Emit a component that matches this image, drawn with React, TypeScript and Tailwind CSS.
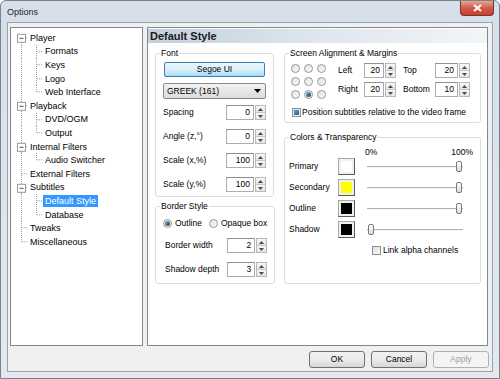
import React from "react";

type TreeNode = {
  label: string;
  level: 0 | 1;
  expander?: boolean;
  lastChild?: boolean;
  selected?: boolean;
};

const TREE: TreeNode[] = [
  { label: "Player", level: 0, expander: true },
  { label: "Formats", level: 1 },
  { label: "Keys", level: 1 },
  { label: "Logo", level: 1 },
  { label: "Web Interface", level: 1, lastChild: true },
  { label: "Playback", level: 0, expander: true },
  { label: "DVD/OGM", level: 1 },
  { label: "Output", level: 1, lastChild: true },
  { label: "Internal Filters", level: 0, expander: true },
  { label: "Audio Switcher", level: 1, lastChild: true },
  { label: "External Filters", level: 0 },
  { label: "Subtitles", level: 0, expander: true },
  { label: "Default Style", level: 1, selected: true },
  { label: "Database", level: 1, lastChild: true },
  { label: "Tweaks", level: 0 },
  { label: "Miscellaneous", level: 0 },
];

const ROW_H = 13.6;
const MID = 6.8;

function TreeRow({ node, first, last }: { node: TreeNode; first: boolean; last: boolean }) {
  const w = node.level === 0 ? 17 : 32;
  return (
    <div className="flex h-[13.6px] items-center">
      <svg width={w} height={ROW_H} className="shrink-0">
        <g stroke="#a0a0a0" strokeDasharray="1 1" strokeWidth="1">
          {node.level === 0 ? (
            <>
              <line x1="10.5" y1={first ? MID : 0} x2="10.5" y2={last ? MID : ROW_H} />
              <line x1="11" y1={MID} x2="17" y2={MID} />
            </>
          ) : (
            <>
              <line x1="10.5" y1="0" x2="10.5" y2={ROW_H} />
              <line x1="25.5" y1="0" x2="25.5" y2={node.lastChild ? MID : ROW_H} />
              <line x1="26" y1={MID} x2="32" y2={MID} />
            </>
          )}
        </g>
        {node.expander && (
          <g>
            <rect x="6.5" y={MID - 3.5} width="8" height="8" fill="#fff" stroke="#989898" />
            <line x1="8.5" y1={MID + 0.5} x2="12.5" y2={MID + 0.5} stroke="#4d4d4d" />
          </g>
        )}
      </svg>
      <span
        className={
          node.selected
            ? "px-[2px] leading-[12px] bg-[#3399ff] text-white"
            : "px-[2px] leading-[12px]"
        }
      >
        {node.label}
      </span>
    </div>
  );
}

function Arrow({ up }: { up?: boolean }) {
  return (
    <svg width="5" height="3" viewBox="0 0 5 3">
      <path d={up ? "M0 3 L2.5 0 L5 3 Z" : "M0 0 L2.5 3 L5 0 Z"} fill="#4a4a4a" />
    </svg>
  );
}

function Spin({ value, w }: { value: string; w: string }) {
  return (
    <div className={`flex h-[15px] ${w}`}>
      <div className="flex-1 border border-[#abadb3] border-t-[#8e8f8f] bg-white pr-[3px] text-right leading-[13px]">
        {value}
      </div>
      <div className="ml-[1px] flex w-[11px] flex-col border border-[#b9b9b9] bg-[#f2f2f2]">
        <div className="flex flex-1 items-center justify-center border-b border-[#c8c8c8] bg-gradient-to-b from-[#f8f8f8] to-[#e4e4e4]">
          <Arrow up />
        </div>
        <div className="flex flex-1 items-center justify-center bg-gradient-to-b from-[#f8f8f8] to-[#e4e4e4]">
          <Arrow />
        </div>
      </div>
    </div>
  );
}

function Radio({ checked }: { checked?: boolean }) {
  return (
    <div className="flex h-[9px] w-[9px] shrink-0 items-center justify-center rounded-full border border-[#979797] bg-gradient-to-br from-[#e2e2e2] to-[#fafafa]">
      {checked && (
        <div className="h-[5px] w-[5px] rounded-full bg-gradient-to-br from-[#7ab0d2] to-[#1a3c55]" />
      )}
    </div>
  );
}

function Check({ filled }: { filled?: boolean }) {
  return (
    <div className="flex h-[9px] w-[9px] shrink-0 items-center justify-center border border-[#8e8f8f] bg-gradient-to-br from-[#dcdcdc] to-[#fbfbfb]">
      {filled && <div className="h-[5px] w-[5px] bg-gradient-to-br from-[#5aa6dc] to-[#1a5c97]" />}
    </div>
  );
}

function Swatch({ color }: { color: string }) {
  return (
    <div className="h-[17px] w-[17px] shrink-0 border border-[#a8a8a8] border-r-[#5a5a5a] border-b-[#5a5a5a] bg-[#f0f0f0] p-[2px]">
      <div className={`h-full w-full ${color}`} />
    </div>
  );
}

function Slider({ atEnd }: { atEnd: boolean }) {
  return (
    <div
      className={`relative ml-[12px] flex h-[12px] w-[96px] items-center ${
        atEnd ? "justify-end pr-[1px]" : "justify-start pl-[1px]"
      }`}
    >
      <div className="absolute left-0 right-0 top-[5px] h-[2px] border-t border-[#b0b0b0] border-b border-b-[#f4f4f4]" />
      <div className="relative h-[11px] w-[6px] rounded-[2px] border border-[#7a7a7a] bg-gradient-to-b from-white to-[#dcdcdc]" />
    </div>
  );
}

function DlgButton({ label, disabled }: { label: string; disabled?: boolean }) {
  return (
    <div
      className={
        disabled
          ? "flex h-[17px] w-[56px] items-center justify-center rounded-[3px] border border-[#adb2b5] bg-[#f4f4f4] text-[#a0a0a0]"
          : "flex h-[17px] w-[56px] items-center justify-center rounded-[3px] border border-[#707070] bg-gradient-to-b from-[#f2f2f2] via-[#ebebeb] to-[#d6d6d6]"
      }
    >
      {label}
    </div>
  );
}

export default function App() {
  return (
    <div className="flex h-[379px] w-[500px] flex-col overflow-hidden whitespace-nowrap rounded-t-[6px] border border-[#7a838c] bg-gradient-to-b from-[#d6dfe9] to-[#e4e9ef] font-['Liberation_Sans',Arial,sans-serif] text-[9px] text-black">
      {/* title bar */}
      <div className="flex h-[21px] items-start justify-between">
        <div className="pl-[6px] pt-[6px] text-[9px] leading-[11px] text-[#1e1e1e]">Options</div>
        <div className="mr-[5px] flex h-[15px] w-[34px] items-center justify-center rounded-b-[4px] border border-t-0 border-[#7b3328] bg-gradient-to-b from-[#e8a493] via-[#d25a48] to-[#c4402f]">
          <svg width="9" height="8" viewBox="0 0 9 8">
            <path d="M1 1 L8 7 M8 1 L1 7" stroke="#fff" strokeWidth="2" />
          </svg>
        </div>
      </div>

      {/* client area */}
      <div className="mx-[6px] flex h-[350px] flex-col border border-[#97a3b0] bg-[#f0f0f0]">
        <div className="flex pl-[2px] pt-[4px]">
          {/* tree */}
          <div className="h-[319px] w-[133px] border border-[#828790] bg-white pt-[3px]">
            {TREE.map((n, i) => (
              <TreeRow key={n.label} node={n} first={i === 0} last={i === TREE.length - 1} />
            ))}
          </div>

          {/* page */}
          <div className="ml-[4px] h-[319px] w-[341px] border border-[#828790] bg-white pt-[1px] text-[8.5px]">
            <div className="h-[14px] bg-gradient-to-r from-[#c3cfdc] via-[#dfe6ee] to-[#f2f5f8] pl-[2px] text-[11px] font-bold leading-[14px] text-[#1a1a1a]">
              Default Style
            </div>

            <div className="mt-[4px] flex gap-[10px] pl-[7px]">
              {/* left column */}
              <div className="flex w-[119px] flex-col">
                <fieldset className="h-[150px] rounded-[3px] border border-[#d5dfe5]">
                  <legend className="ml-[4px] px-[1px] leading-[12px]">Font</legend>
                  <div className="flex flex-col px-[7px]">
                    <div className="mx-[1px] mt-[3px] flex h-[15px] items-center justify-center rounded-[2px] border border-[#3c7fb1] bg-gradient-to-b from-[#eaf6fd] via-[#d9f0fc] to-[#a7d9f5]">
                      Segoe UI
                    </div>
                    <div className="mt-[6px] flex h-[16px] items-center justify-between rounded-[2px] border border-[#8a8a8a] bg-gradient-to-b from-[#f2f2f2] to-[#dcdcdc] pl-[3px] pr-[4px]">
                      <span>GREEK (161)</span>
                      <svg width="7" height="4" viewBox="0 0 7 4">
                        <path d="M0 0 L3.5 4 L7 0 Z" fill="#000" />
                      </svg>
                    </div>
                    <div className="mt-[6px] flex flex-col gap-[9px]">
                      {[
                        ["Spacing", "0"],
                        ["Angle (z,°)", "0"],
                        ["Scale (x,%)", "100"],
                        ["Scale (y,%)", "100"],
                      ].map(([l, v]) => (
                        <div key={l} className="flex items-center justify-between">
                          <span>{l}</span>
                          <Spin value={v} w="w-[40px]" />
                        </div>
                      ))}
                    </div>
                  </div>
                </fieldset>

                <fieldset className="mt-[3px] h-[84px] rounded-[3px] border border-[#d5dfe5]">
                  <legend className="ml-[4px] px-[1px] leading-[12px]">Border Style</legend>
                  <div className="flex flex-col px-[7px]">
                    <div className="mt-[6px] flex h-[11px] items-center">
                      <Radio checked />
                      <span className="ml-[3px]">Outline</span>
                      <div className="ml-[7px]">
                        <Radio />
                      </div>
                      <span className="ml-[3px]">Opaque box</span>
                    </div>
                    <div className="mt-[9px] flex items-center justify-between pl-[2px]">
                      <span>Border width</span>
                      <Spin value="2" w="w-[40px]" />
                    </div>
                    <div className="mt-[9px] flex items-center justify-between pl-[2px]">
                      <span>Shadow depth</span>
                      <Spin value="3" w="w-[40px]" />
                    </div>
                  </div>
                </fieldset>
              </div>

              {/* right column */}
              <div className="flex w-[197px] flex-col">
                <fieldset className="h-[76px] rounded-[3px] border border-[#d5dfe5]">
                  <legend className="ml-[4px] px-[1px] leading-[12px]">Screen Alignment &amp; Margins</legend>
                  <div className="mt-[4px] flex items-start pl-[6px]">
                    <div className="mt-[1px] grid grid-cols-[9px_9px_9px] gap-x-[4px] gap-y-[4px]">
                      {[0, 1, 2, 3, 4, 5, 6, 7, 8].map((i) => (
                        <Radio key={i} checked={i === 7} />
                      ))}
                    </div>
                    <div className="ml-[12px] grid grid-cols-[26px_32px_39px_35px] items-center gap-y-[4px]">
                      <span>Left</span>
                      <Spin value="20" w="w-[32px]" />
                      <span className="pl-[7px]">Top</span>
                      <Spin value="20" w="w-[35px]" />
                      <span>Right</span>
                      <Spin value="20" w="w-[32px]" />
                      <span className="pl-[7px]">Bottom</span>
                      <Spin value="10" w="w-[35px]" />
                    </div>
                  </div>
                  <div className="mt-[7px] flex h-[12px] items-center pl-[7px]">
                    <Check filled />
                    <span className="ml-[1px]">Position subtitles relative to the video frame</span>
                  </div>
                </fieldset>

                <fieldset className="mt-[8px] h-[153px] rounded-[3px] border border-[#d5dfe5]">
                  <legend className="ml-[4px] px-[1px] leading-[12px]">Colors &amp; Transparency</legend>
                  <div className="mt-[4px] flex h-[10px] items-center justify-between pl-[80px] pr-[7px] leading-[10px]">
                    <span>0%</span>
                    <span>100%</span>
                  </div>
                  <div className="mt-[1px] flex flex-col gap-[4px] pl-[4px]">
                    {[
                      ["Primary", "bg-white", true],
                      ["Secondary", "bg-[#ffff00]", true],
                      ["Outline", "bg-black", true],
                      ["Shadow", "bg-black", false],
                    ].map(([l, c, end]) => (
                      <div key={l as string} className="flex h-[17px] items-center">
                        <span className="w-[49px]">{l as string}</span>
                        <Swatch color={c as string} />
                        <Slider atEnd={end as boolean} />
                      </div>
                    ))}
                  </div>
                  <div className="mt-[7px] flex h-[11px] items-center pl-[87px]">
                    <Check />
                    <span className="ml-[2px]">Link alpha channels</span>
                  </div>
                </fieldset>
              </div>
            </div>
          </div>
        </div>

        {/* buttons */}
        <div className="mt-[5px] flex justify-end gap-[6px] pr-[3px] text-[8.5px]">
          <DlgButton label="OK" />
          <DlgButton label="Cancel" />
          <DlgButton label="Apply" disabled />
        </div>
      </div>
    </div>
  );
}
